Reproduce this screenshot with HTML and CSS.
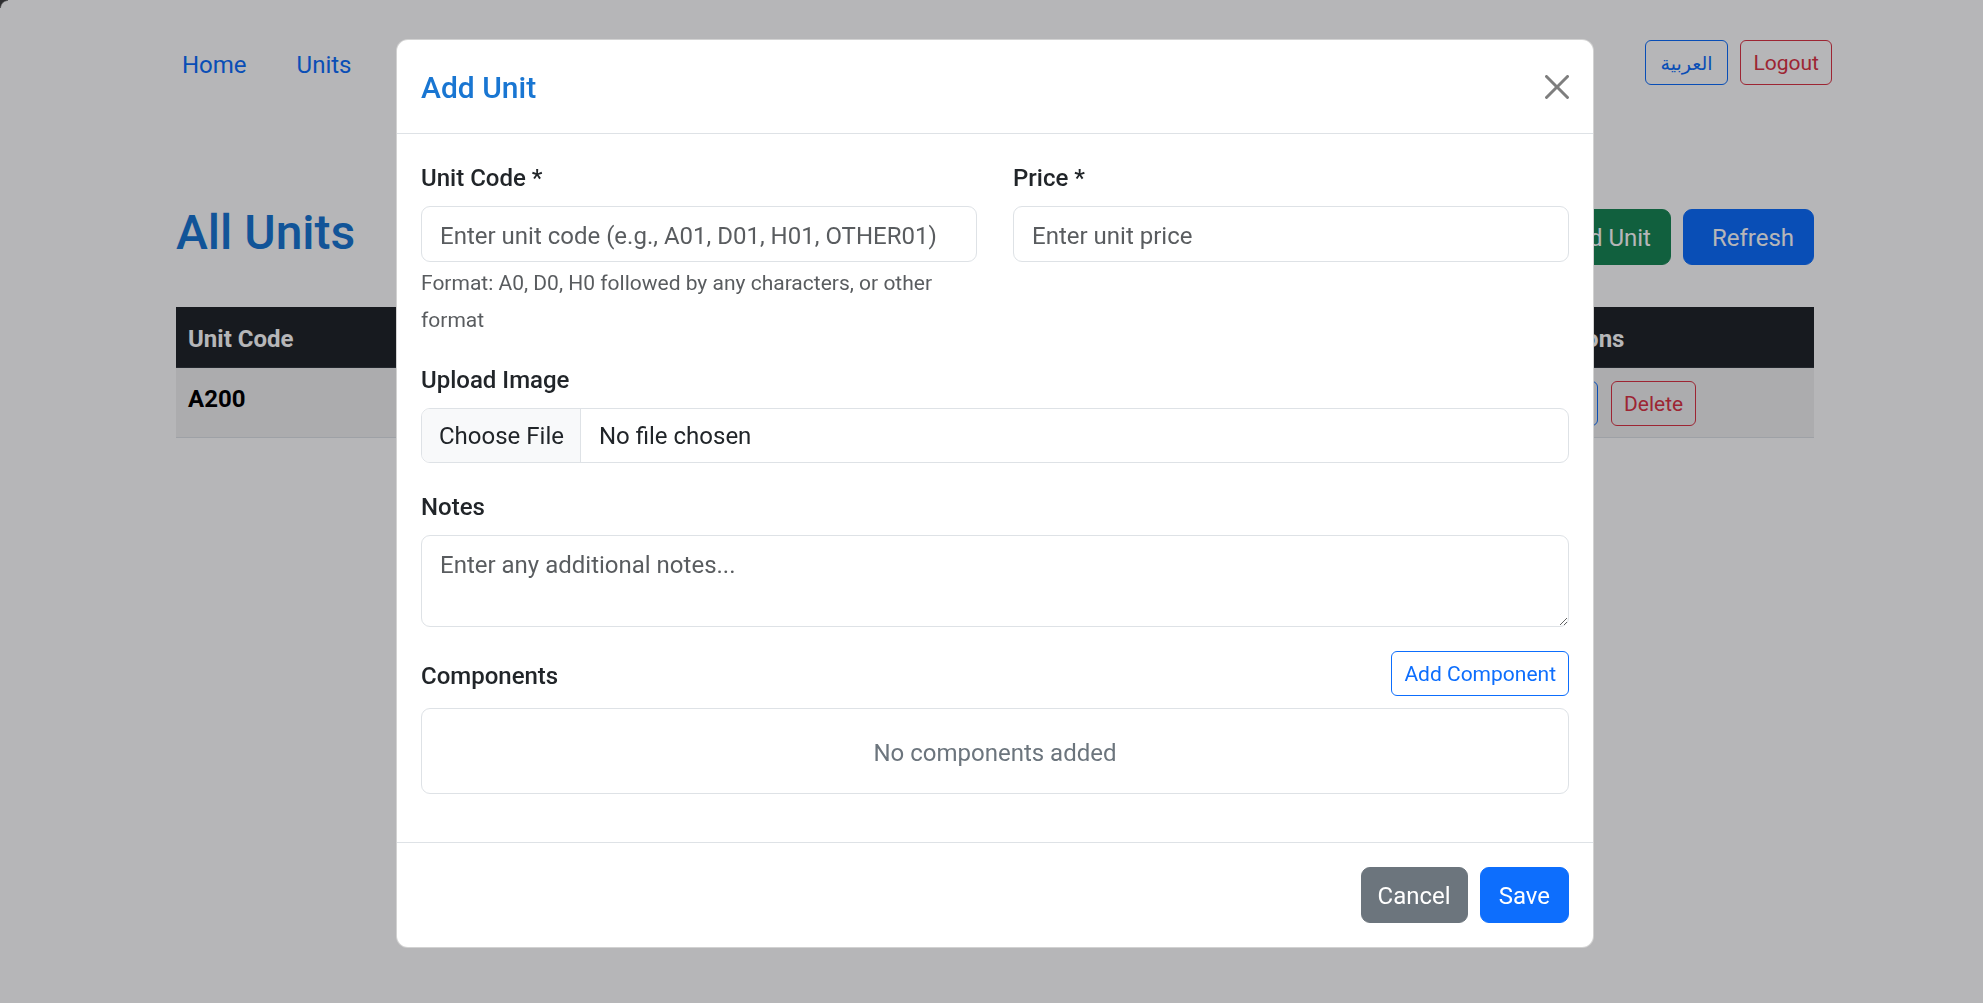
FILE: index.html
```html
<!DOCTYPE html>
<html lang="en">
<head>
<meta charset="utf-8">
<title>All Units</title>
<link rel="stylesheet" href="styles.css">
</head>
<body>
  <nav class="topnav">
    <div class="nav-links">
      <a href="#" class="nav-link">Home</a>
      <a href="#" class="nav-link">Units</a>
    </div>
    <div class="nav-actions">
      <button class="btn btn-sm btn-outline-primary arabic">العربية</button>
      <button class="btn btn-sm btn-outline-danger">Logout</button>
    </div>
  </nav>

  <main class="container">
    <div class="page-head">
      <h2 class="page-title">All Units</h2>
      <div class="head-actions">
        <button class="btn btn-success">+ Add Unit</button>
        <button class="btn btn-primary btn-refresh">Refresh</button>
      </div>
    </div>

    <table class="units-table">
      <colgroup>
        <col class="c-code"><col class="c-actions">
      </colgroup>
      <thead>
        <tr><th>Unit Code</th><th>Actions</th></tr>
      </thead>
      <tbody>
        <tr>
          <td class="code">A200</td>
          <td><div class="row-actions"><button class="btn btn-sm btn-outline-primary btn-edit">Edit</button><button class="btn btn-sm btn-outline-danger">Delete</button></div></td>
        </tr>
      </tbody>
    </table>
  </main>

  <div class="backdrop"></div>
  <div class="window-corner"></div>

  <div class="modal">
    <div class="modal-dialog">
      <div class="modal-content">
        <div class="modal-header">
          <h5 class="modal-title">Add Unit</h5>
          <button class="btn-close" aria-label="Close">
            <svg viewBox="0 0 16 16" width="24" height="24"><path d="M.293.293a1 1 0 0 1 1.414 0L8 6.586 14.293.293a1 1 0 1 1 1.414 1.414L9.414 8l6.293 6.293a1 1 0 0 1-1.414 1.414L8 9.414l-6.293 6.293a1 1 0 0 1-1.414-1.414L6.586 8 .293 1.707a1 1 0 0 1 0-1.414z"/></svg>
          </button>
        </div>
        <div class="modal-body">
          <div class="form-row">
            <div class="group">
              <label class="form-label">Unit Code *</label>
              <input class="form-control" type="text" placeholder="Enter unit code (e.g., A01, D01, H01, OTHER01)">
              <div class="help"><small>Format: A0, D0, H0 followed by any characters, or other format</small></div>
            </div>
            <div class="group">
              <label class="form-label">Price *</label>
              <input class="form-control" type="text" placeholder="Enter unit price">
            </div>
          </div>

          <div class="group">
            <label class="form-label">Upload Image</label>
            <div class="file-input">
              <span class="file-btn">Choose File</span>
              <span class="file-name">No file chosen</span>
            </div>
          </div>

          <div class="group">
            <label class="form-label">Notes</label>
            <textarea class="form-control notes" placeholder="Enter any additional notes..."></textarea>
          </div>

          <div class="group">
            <div class="comp-head">
              <label class="form-label flush">Components</label>
              <button class="btn btn-sm btn-outline-primary">Add Component</button>
            </div>
            <div class="comp-box">No components added</div>
          </div>
        </div>
        <div class="modal-footer">
          <button class="btn btn-secondary btn-cancel">Cancel</button>
          <button class="btn btn-primary">Save</button>
        </div>
      </div>
    </div>
  </div>
</body>
</html>
```
FILE: styles.css
```css
* { box-sizing: border-box; }

html, body {
  margin: 0;
  padding: 0;
}

body {
  width: 1983px;
  height: 1003px;
  overflow: hidden;
  background: #fff;
  font-family: Roboto, "Noto Sans", "DejaVu Sans", sans-serif;
  font-size: 24px;
  line-height: 36px;
  color: #212529;
}

/* ---------- buttons ---------- */
.btn {
  display: inline-block;
  font-family: inherit;
  font-size: 24px;
  line-height: 36px;
  font-weight: 400;
  padding: 10px 18px 8px;
  border: 1px solid transparent;
  border-radius: 9px;
  background: transparent;
  cursor: pointer;
  white-space: nowrap;
}
.btn-sm {
  font-size: 21px;
  line-height: 31px;
  padding: 7px 12px 5px;
  border-radius: 6px;
}
.btn-primary { background: #0d6efd; border-color: #0d6efd; color: #fff; }
.btn-secondary { background: #6c757d; border-color: #6c757d; color: #fff; }
.btn-success { background: #198754; border-color: #198754; color: #fff; }
.btn-outline-primary { border-color: #0d6efd; color: #0d6efd; background: #fff; }
.btn-outline-danger { border-color: #dc3545; color: #dc3545; background: transparent; }

/* ---------- top navigation ---------- */
.topnav {
  display: flex;
  justify-content: space-between;
  align-items: center;
  padding: 40px 151px 0 182px;
}
.nav-links {
  display: flex;
  gap: 50px;
}
.nav-link {
  color: #0d6efd;
  text-decoration: none;
  font-size: 24px;
  line-height: 36px;
  padding-top: 5px;
}
.nav-actions {
  display: flex;
  gap: 12px;
}
.nav-actions .btn-outline-primary { background: transparent; }
.arabic {
  font-family: "DejaVu Sans", "Noto Sans", sans-serif;
  font-size: 19px;
  padding-left: 15px;
  padding-right: 15px;
}

/* ---------- page content ---------- */
.container {
  padding: 0 169px 0 176px;
}
.page-head {
  display: flex;
  justify-content: space-between;
  align-items: center;
  margin-top: 117px;
  margin-bottom: 35px;
}
.page-title {
  margin: 0 0 10px;
  padding-top: 2px;
  font-size: 48px;
  line-height: 57.6px;
  font-weight: 500;
  color: #1976d2;
}
.head-actions {
  display: flex;
  gap: 12px;
}
.btn-success {
  padding-right: 19px;
}
.btn-refresh {
  padding-left: 28px;
  padding-right: 19px;
}

.units-table {
  width: 100%;
  border-collapse: collapse;
  table-layout: fixed;
}
.c-code { width: 1354px; }
.c-actions { width: 284px; }
.units-table th {
  background: #212529;
  color: #fff;
  text-align: left;
  font-weight: 700;
  padding: 14px 12px 10px;
  line-height: 36px;
  border-bottom: 1px solid #32383e;
}
.units-table td {
  background: #f2f2f2;
  padding: 13px 12px 11px;
  vertical-align: top;
  line-height: 36px;
  border-bottom: 1px solid #dee2e6;
}
.units-table td.code { font-weight: 700; color: #000; }
.row-actions {
  display: flex;
  gap: 13px;
}
.btn-edit {
  background: transparent;
  width: 56px;
  padding-left: 0;
  padding-right: 0;
  text-align: center;
}

/* ---------- backdrop + modal ---------- */
.backdrop {
  position: fixed;
  inset: 0;
  background: rgba(0, 0, 7, 0.286);
}
.window-corner {
  position: fixed;
  top: 0;
  left: 0;
  width: 8px;
  height: 8px;
  background: radial-gradient(circle at 8px 8px, transparent 6.5px, #2e2e30 8px);
}
.modal {
  position: fixed;
  inset: 0;
}
.modal-dialog {
  width: 1198px;
  margin: 39px 0 0 396px;
}
.modal-content {
  background: #fff;
  border: 1px solid rgba(0, 0, 0, 0.175);
  border-radius: 12px;
}
.modal-header {
  display: flex;
  justify-content: space-between;
  align-items: center;
  padding: 24px;
  border-bottom: 1px solid #dee2e6;
}
.modal-title {
  margin: 0;
  padding-top: 2px;
  font-size: 30px;
  line-height: 43px;
  font-weight: 500;
  color: #1976d2;
}
.btn-close {
  width: 24px;
  height: 24px;
  padding: 0;
  border: 0;
  background: transparent;
  display: flex;
  cursor: pointer;
}
.btn-close svg { fill: #000; opacity: 0.5; }

.modal-body {
  padding: 24px;
}
.form-row {
  display: grid;
  grid-template-columns: 1fr 1fr;
  column-gap: 36px;
}
.group {
  margin-bottom: 24px;
}
.form-label {
  display: block;
  font-size: 24px;
  line-height: 36px;
  font-weight: 500;
  padding-top: 2px;
  margin-bottom: 10px;
  color: #212529;
}
.form-label.flush {
  margin-bottom: 0;
  padding-top: 4px;
}
.form-control {
  display: block;
  width: 100%;
  height: 56px;
  padding: 11px 18px 7px;
  font-family: inherit;
  font-size: 24px;
  line-height: 36px;
  color: #212529;
  background: #fff;
  border: 1px solid #dee2e6;
  border-radius: 9px;
  outline: none;
}
.form-control::placeholder {
  color: rgba(33, 37, 41, 0.75);
  opacity: 1;
}
.form-control.notes {
  height: 92px;
  resize: vertical;
}
.help {
  line-height: 36px;
  padding-top: 2px;
  margin-bottom: -2px;
}
.help small {
  font-size: 21px;
  color: rgba(33, 37, 41, 0.75);
}

.file-input {
  display: flex;
  height: 55px;
  border: 1px solid #dee2e6;
  border-radius: 9px;
  overflow: hidden;
}
.file-btn {
  padding: 9px 16px 9px 17px;
  background: #f8f9fa;
  border-right: 1px solid #dee2e6;
  color: #212529;
}
.file-name {
  padding: 9px 18px;
  color: #212529;
}

.comp-head {
  display: flex;
  justify-content: space-between;
  align-items: center;
  margin-bottom: 12px;
}
.comp-box {
  border: 1px solid #dee2e6;
  border-radius: 9px;
  padding: 26px 24px 22px;
  text-align: center;
  color: #6c757d;
}

.modal-footer {
  display: flex;
  justify-content: flex-end;
  gap: 12px;
  padding: 24px;
  border-top: 1px solid #dee2e6;
}
.btn-cancel {
  padding-left: 16px;
  padding-right: 16px;
}
```
